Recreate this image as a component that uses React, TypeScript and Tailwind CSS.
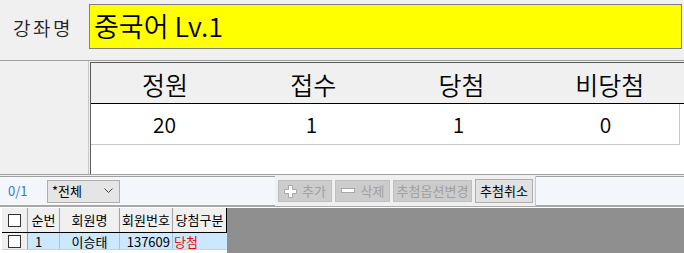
import React from "react";

const font = { fontFamily: '"Malgun Gothic", "Noto Sans CJK KR", "Noto Sans", sans-serif' };

const Check = () => (
  <div className="w-[13px] h-[13px] border border-[#333] bg-white" />
);

function App() {
  return (
    <div className="w-[684px] h-[253px] bg-[#f0f0f0] overflow-hidden text-black" style={font}>
      {/* title row */}
      <div className="h-[60px] flex items-start">
        <div className="w-[89px] pl-[13px] pt-[16px] text-[19px] leading-[24px] tracking-[2.5px] text-[#222] font-[350]">강좌명</div>
        <div className="mt-[4px] w-[593px] h-[45px] border border-[#7f7f7f] bg-[#ffff00] pl-[4px] pt-[5px] text-[27px] leading-[32px] font-[350]">
          중국어 Lv.1
        </div>
      </div>
      <div className="h-px bg-[#a0a0a0]" />

      {/* stats */}
      <div className="h-[113px] flex">
        <div className="w-[89px] border-r border-[#c8c8c8]" />
        <div className="ml-[1px] flex-1 pt-px">
          <div className="h-full border-l border-t border-[#5a5a5a] bg-white">
            <div className="grid grid-cols-4 h-[41px] bg-[#f0f0f0] border-b border-black text-[25px] leading-[42px] text-center font-[350]">
              <div>정원</div>
              <div>접수</div>
              <div>당첨</div>
              <div>비당첨</div>
            </div>
            <div className="grid grid-cols-4 h-[41px] mr-[4px] border-b border-r border-[#c8c8c8] text-[21px] leading-[40px] text-center font-[350]">
              <div>20</div>
              <div>1</div>
              <div>1</div>
              <div>0</div>
            </div>
          </div>
        </div>
      </div>
      <div className="h-px bg-[#a0a0a0]" />
      <div className="h-px bg-[#f0f0f0]" />
      <div className="h-px bg-[#a0a0a0]" />

      {/* toolbar */}
      <div className="h-[30px] flex items-center bg-[#f3f6fb] border-b-2 border-[#a8a8a8]">
        <div className="w-[47px] pl-[8px] text-[13px] text-[#3b78d8]">0/1</div>
        <div className="w-[73px] h-[23px] border border-[#adadad] bg-[#e5e5e5] flex items-center pl-[4px] pr-[6px] text-[13px]">
          <span className="flex-1">*전체</span>
          <svg width="9" height="6" viewBox="0 0 9 6" fill="none" stroke="#444" strokeWidth="1">
            <path d="M0.5 0.5 L4.5 4.5 L8.5 0.5" />
          </svg>
        </div>
        <div className="ml-[155px] h-[30px] flex items-center gap-[3px] pl-[3px] pr-[2px] border-r border-[#c8c8c8] bg-[#f0f0f0]">
          <div className="w-[54px] h-[22px] border border-[#bfbfbf] bg-[#cccccc] flex items-center justify-center gap-[5px] text-[13px] text-[#a0a0a0]">
            <svg width="13" height="13" viewBox="0 0 13 13" fill="#ffffff" stroke="#a8a8a8">
              <path d="M4.5 0.5 H8.5 V4.5 H12.5 V8.5 H8.5 V12.5 H4.5 V8.5 H0.5 V4.5 H4.5 Z" />
            </svg>
            <span>추가</span>
          </div>
          <div className="w-[55px] h-[22px] border border-[#bfbfbf] bg-[#cccccc] flex items-center justify-center gap-[6px] text-[13px] text-[#a0a0a0]">
            <svg width="14" height="6" viewBox="0 0 14 6" fill="#ffffff" stroke="#a8a8a8">
              <rect x="0.5" y="0.5" width="13" height="4" />
            </svg>
            <span>삭제</span>
          </div>
          <div className="w-[79px] h-[22px] border border-[#bfbfbf] bg-[#cccccc] flex items-center justify-center text-[13px] text-[#a0a0a0]">
            추첨옵션변경
          </div>
          <div className="w-[58px] h-[24px] border border-[#adadad] bg-[#e1e1e1] flex items-center justify-center text-[13px]">
            추첨취소
          </div>
        </div>
      </div>

      {/* grid */}
      <div className="flex h-[47px] bg-white pl-[2px] pt-px">
        <div className="flex flex-col">
          <div className="flex h-[25px] bg-[#f0f0f0] border-b border-black text-[13px] leading-[24px] text-center">
            <div className="w-[26px] flex items-center justify-center border-r border-[#a0a0a0]"><Check /></div>
            <div className="w-[32px] border-r border-[#a0a0a0]">순번</div>
            <div className="w-[60px] border-r border-[#a0a0a0]">회원명</div>
            <div className="w-[53px] border-r border-[#a0a0a0]">회원번호</div>
            <div className="w-[54px] border-r border-black">당첨구분</div>
          </div>
          <div className="flex h-[17px] text-[13px] leading-[17px] border-b border-[#d0d0d0]">
            <div className="w-[26px] flex items-center justify-center border-r border-[#a0a0a0] bg-[#f0f0f0]"><Check /></div>
            <div className="w-[32px] pl-[7px] bg-[#cce8ff] border-r border-[#a0c4e0]">1</div>
            <div className="w-[60px] text-center bg-[#cce8ff] border-r border-[#a0c4e0]">이승태</div>
            <div className="w-[53px] text-right pr-[2px] bg-[#cce8ff] border-r border-[#a0c4e0]">137609</div>
            <div className="w-[54px] pl-[1px] bg-[#cce8ff] text-[#e01010]">당첨</div>
          </div>
        </div>
        <div className="flex-1 bg-[#8f8f8f]" />
      </div>
    </div>
  );
}

export default App;
